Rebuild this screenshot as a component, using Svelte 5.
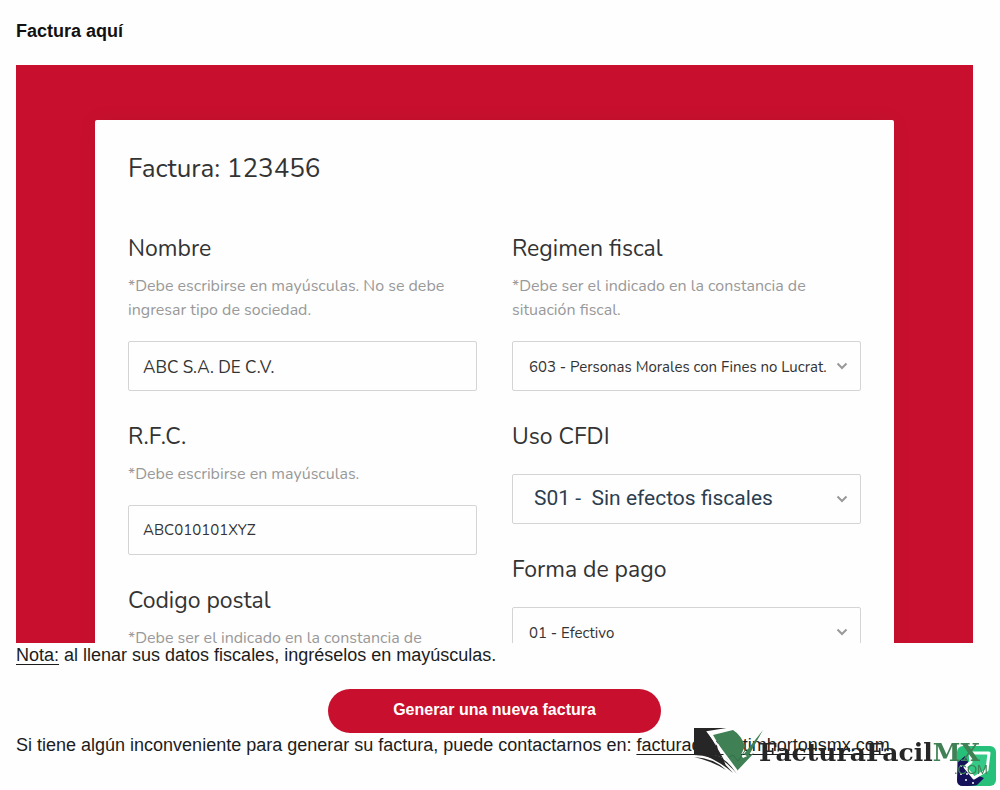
<script>
  let nombre = $state("ABC S.A. DE C.V.");
  let rfc = $state("ABC010101XYZ");
  let regimen = $state("603");
  let uso = $state("S01");
  let forma = $state("01");
</script>

{#snippet chevron()}
  <svg class="chevron" viewBox="0 0 12 8" aria-hidden="true">
    <path d="M1.5 1.5 L6 6 L10.5 1.5" />
  </svg>
{/snippet}

<main class="page">
  <h1>Factura aquí</h1>

  <section class="frame">
    <form class="card">
      <h2>Factura: 123456</h2>

      <div class="columns">
        <div class="column">
          <div class="field">
            <label for="nombre">Nombre</label>
            <p class="hint">*Debe escribirse en mayúsculas. No se debe ingresar tipo de sociedad.</p>
            <input id="nombre" class="large" type="text" bind:value={nombre} />
          </div>

          <div class="field">
            <label for="rfc">R.F.C.</label>
            <p class="hint">*Debe escribirse en mayúsculas.</p>
            <input id="rfc" type="text" bind:value={rfc} />
          </div>

          <div class="field">
            <label for="cp">Codigo postal</label>
            <p class="hint">*Debe ser el indicado en la constancia de situación fiscal.</p>
            <input id="cp" type="text" />
          </div>
        </div>

        <div class="column">
          <div class="field">
            <label for="regimen">Regimen fiscal</label>
            <p class="hint">*Debe ser el indicado en la constancia de situación fiscal.</p>
            <div class="select">
              <select id="regimen" bind:value={regimen}>
                <option value="603">603 - Personas Morales con Fines no Lucrat.</option>
              </select>
              {@render chevron()}
            </div>
          </div>

          <div class="field">
            <label for="uso">Uso CFDI</label>
            <div class="select">
              <select id="uso" class="uso" bind:value={uso}>
                <option value="S01">S01 -&nbsp; Sin efectos fiscales</option>
              </select>
              {@render chevron()}
            </div>
          </div>

          <div class="field">
            <label for="forma">Forma de pago</label>
            <div class="select">
              <select id="forma" bind:value={forma}>
                <option value="01">01 - Efectivo</option>
              </select>
              {@render chevron()}
            </div>
          </div>
        </div>
      </div>
    </form>
  </section>

  <p class="note"><u>Nota:</u> al llenar sus datos fiscales, ingréselos en mayúsculas.</p>

  <button class="generate" type="button">Generar una nueva factura</button>

  <p class="note">
    Si tiene algún inconveniente para generar su factura, puede contactarnos en:
    <a href="mailto:facturacion@timhortonsmx.com">facturacion@timhortonsmx.com</a>
  </p>
</main>

<svg class="watermark" width="310" height="66" viewBox="0 0 310 66" role="img" aria-label="FacturaFacilMX.com">
  <!-- app badge -->
  <rect x="267" y="22" width="39" height="40" rx="6" fill="#27c07a" />
  <path d="M268 38 L275 32 L284 50 L294 54 L287 61 Q284 62 273 62 Q267 62 267 56 Z" fill="#14105a" />
  <path d="M280 29 L299 29 L297 46 L284 54 L275 43 L281 38 Z" fill="#35c987" stroke="#fff" stroke-width="3" stroke-linejoin="round" />
  <g fill="#fff">
    <circle cx="271" cy="42" r="1" />
    <circle cx="271" cy="50" r="1" />
    <circle cx="276" cy="56" r="1" />
    <circle cx="283" cy="59" r="1" />
    <circle cx="277" cy="50" r="1" />
  </g>

  <!-- book with check mark -->
  <path d="M4 4 H43 L18 8 L33 34 Q20 29 4 30 Z" fill="#262626" />
  <path d="M4 31 Q22 31 36 42 L33 34 Q20 28 4 28 Z" fill="#262626" />
  <path d="M4 33 Q24 34 36 46 Q22 37 4 33 Z M14 31 Q32 34 43 49 Q32 39 14 31 Z M24 30 Q37 35 47 50 Q38 39 24 30 Z" fill="#262626" />
  <path d="M23 11 L43 6 Q51 11 55 22 L51 31 L53 34 L64 29 L47 47 L37 35 Z" fill="#3f8054" />
  <path d="M54 30 L73 6 Q65 20 58 33 Z" fill="#3f8054" />
  <path d="M37 34 L43 31 L48 37 L56 25" fill="none" stroke="#33704a" stroke-width="1" />
  <path d="M47 47 L18 8 L43 4" fill="none" stroke="#fff" stroke-width="2" />

  <text class="brand" x="69" y="37">FacturaFacil<tspan class="mx">MX</tspan></text>
  <text class="com" x="264" y="50">.COM</text>
</svg>

<style>
  :global(body) {
    margin: 0;
    background: #fefefe;
  }

  .page {
    padding: 19px 27px 16px 16px;
    font-family: "Liberation Sans", Arial, sans-serif;
    font-size: 18px;
    line-height: 24px;
    color: #1c1c1c;
  }

  h1 {
    margin: 0 0 22px;
    font-size: 18px;
    line-height: 24px;
    color: #111;
  }

  .frame {
    aspect-ratio: 957 / 578;
    box-sizing: border-box;
    padding: 55px 79px 0;
    overflow: hidden;
    background: #c8102e;
  }

  .card {
    padding: 33px;
    border-radius: 2px;
    background: #fefefe;
    box-shadow: 0 0 20px rgba(0, 0, 0, 0.06);
    font-family: Nunito, Lato, sans-serif;
    color: #333;
  }

  h2 {
    margin: 0 0 48px;
    font-size: 26px;
    font-weight: 400;
    line-height: 32px;
  }

  .columns {
    display: grid;
    grid-template-columns: 1fr 1fr;
    gap: 35px;
  }

  .column {
    display: flex;
    flex-direction: column;
    gap: 30px;
    min-width: 0;
  }

  label {
    display: block;
    font-size: 23px;
    line-height: 32px;
  }

  .hint {
    margin: 9px 0 19px;
    font-size: 16px;
    line-height: 24px;
    color: #999;
  }

  input,
  select {
    display: block;
    box-sizing: border-box;
    width: 100%;
    height: 50px;
    padding: 0 16px;
    border: 1px solid #d4d4d4;
    border-radius: 2px;
    background: #fefefe;
    font-family: inherit;
    font-size: 15px;
    color: #333;
  }

  input { padding-left: 14px; }

  .large {
    padding-top: 3px;
    font-size: 17px;
  }

  .select { position: relative; }
  label + .select { margin-top: 21px; }

  select {
    appearance: none;
    padding-top: 2px;
    padding-right: 32px;
  }

  .uso {
    padding: 0 32px 2px 21px;
    font-family: Roboto, sans-serif;
    font-size: 21px;
    color: #2c3e50;
  }

  .chevron {
    position: absolute;
    top: 21px;
    right: 13px;
    width: 12px;
    height: 8px;
    fill: none;
    stroke: #999;
    stroke-width: 2;
    pointer-events: none;
  }

  .note { margin: 0; }

  .note u,
  .note a {
    color: inherit;
    text-decoration: underline;
    text-underline-offset: 3px;
  }

  .generate {
    display: block;
    height: 44px;
    margin: 22px auto 0;
    padding: 0 65px 2px;
    border: 0;
    border-radius: 22px;
    background: #c8102e;
    font-family: inherit;
    font-size: 16px;
    font-weight: 700;
    color: #fff;
  }

  .watermark {
    position: fixed;
    right: 0;
    bottom: 0;
  }

  .brand {
    font-family: "DejaVu Serif", serif;
    font-size: 25px;
    font-weight: 700;
    fill: #262626;
  }

  .mx { fill: #3f8054; }

  .com {
    font-family: "Liberation Sans", sans-serif;
    font-size: 13px;
    fill: #3f8054;
  }
</style>
